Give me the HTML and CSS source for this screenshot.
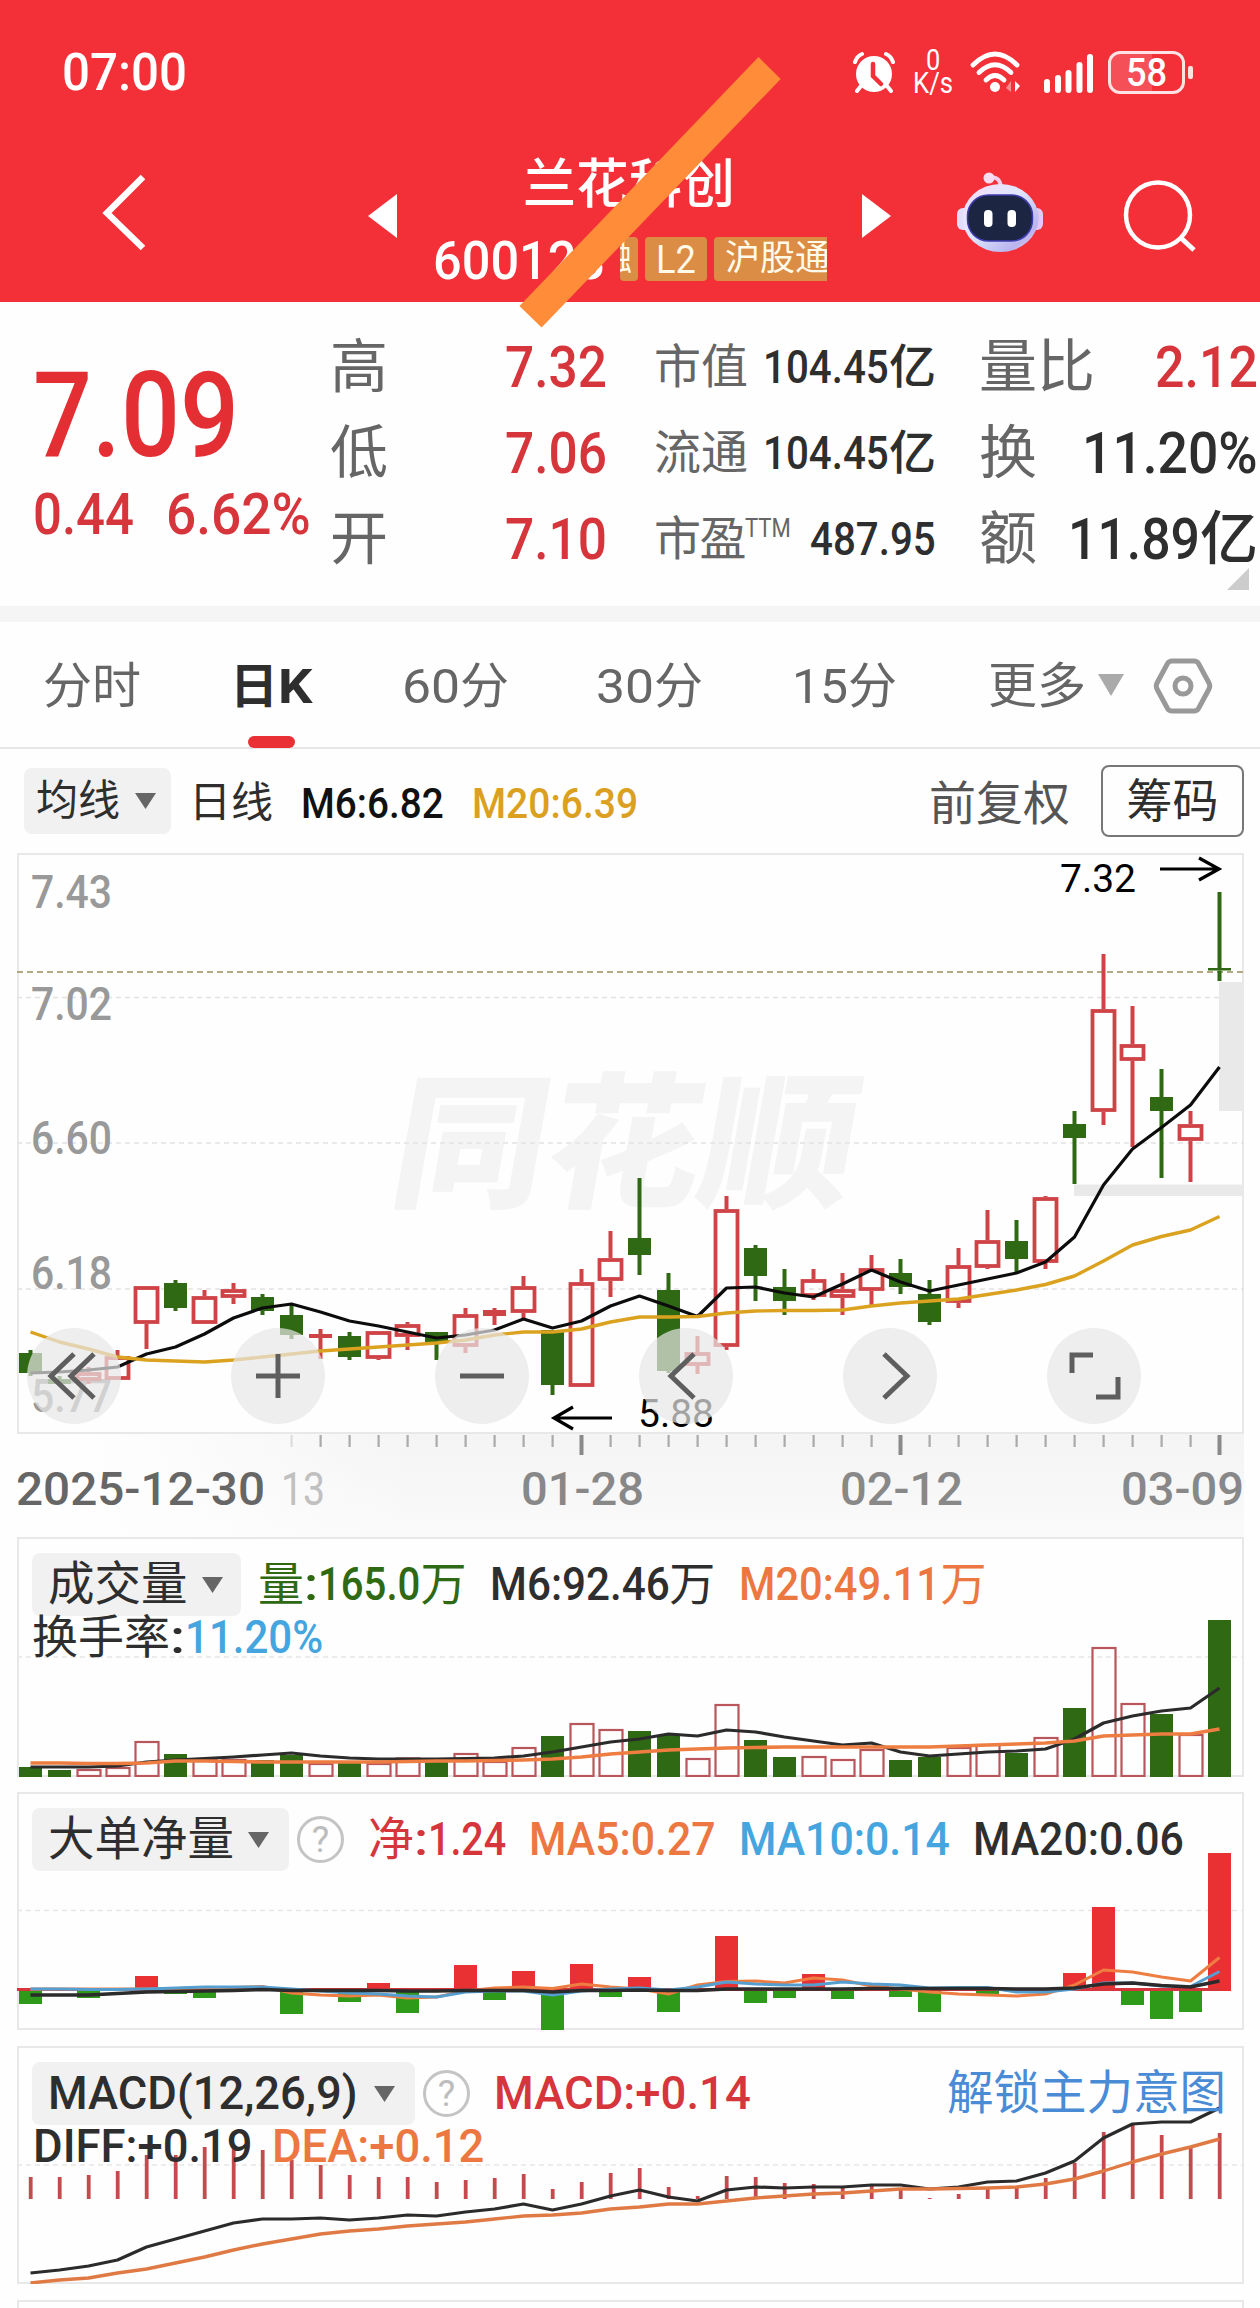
FILE: index.html
```html
<!DOCTYPE html>
<html lang="zh-CN">
<head>
<meta charset="utf-8">
<title>兰花科创 600123</title>
<link rel="stylesheet" href="styles.css">
</head>
<body>
<header class="top">
  <div class="status">
    <span class="clock"><span data-w="125">07:00</span></span>
    <svg class="i-alarm" width="42" height="42" viewBox="0 0 42 42"><circle cx="21" cy="23" r="18" fill="#fff"/><path d="M2 11 Q4 5 9 3M40 11Q38 5 33 3M8 35l-4 5M34 35l4 5" stroke="#fff" stroke-width="4" fill="none" stroke-linecap="round"/><path d="M20 13v12l8 8" stroke="#f32f38" stroke-width="4.5" fill="none" stroke-linecap="round"/></svg>
    <span class="rate"><b data-w="14">0</b><b data-w="40">K/s</b></span>
    <svg class="i-wifi" width="52" height="42" viewBox="0 0 52 42"><g fill="none" stroke="#fff" stroke-width="4.8" stroke-linecap="round"><path d="M3 14Q25 -8 47 14"/><path d="M9 21.500Q25 6 41 21.500"/><path d="M16 29Q25 20 34 29"/></g><circle cx="25" cy="36" r="5" fill="#fff"/><path d="M45 30v11l5-6z" fill="#fff"/><path d="M41 30v11l-5-4z" fill="#fff" opacity=".45"/></svg>
    <svg class="i-signal" width="50" height="42" viewBox="0 0 50 42"><g fill="#fff"><rect x="0" y="27" width="6" height="14" rx="3"/><rect x="11" y="23" width="6" height="18" rx="3"/><rect x="21.500" y="18" width="6" height="23" rx="3"/><rect x="32.500" y="10" width="6" height="31" rx="3"/><rect x="43" y="2" width="6" height="39" rx="3"/></g></svg>
    <span class="battery"><span data-w="41">58</span></span><i class="nub"></i>
  </div>
  <nav class="nav">
    <svg class="i-back" width="50" height="84" viewBox="0 0 50 84"><path d="M43 6L7 42l36 35" fill="none" stroke="#fff" stroke-width="6.500"/></svg>
    <svg class="i-prev" width="29" height="44" viewBox="0 0 29 44"><path d="M29 0v44L0 22z" fill="#fff"/></svg>
    <div class="stock">
      <div class="name">兰花科创</div>
      <div class="codes"><span class="code"><span data-w="172">600123</span></span><em class="tag cut">融</em><em class="tag l2"><span data-w="40">L2</span></em><em class="tag hgt">沪股通</em></div>
    </div>
    <svg class="i-next" width="29" height="44" viewBox="0 0 29 44"><path d="M0 0v44l29-22z" fill="#fff"/></svg>
    <svg class="i-robot" width="86" height="86" viewBox="957 170 86 86">
      <defs><linearGradient id="head" x1="0" y1="0" x2="1" y2="1"><stop offset="0" stop-color="#f8dcf6"/><stop offset=".45" stop-color="#dfe7ff"/><stop offset=".8" stop-color="#b9b4ee"/><stop offset="1" stop-color="#f5d7ea"/></linearGradient></defs>
      <path d="M989 178q11-3 12 10" fill="none" stroke="#f3cdea" stroke-width="4"/><circle cx="989" cy="178" r="5.500" fill="#f8dcf0"/>
      <rect x="957" y="208" width="14" height="22" rx="6" fill="#e3dcff"/><rect x="1029" y="208" width="14" height="22" rx="6" fill="#e3c7f4"/>
      <ellipse cx="1000.500" cy="218" rx="38" ry="34" fill="url(#head)"/>
      <rect x="967.500" y="195" width="65" height="46" rx="21" fill="#1c2541" stroke="#3f3cae" stroke-width="1.500"/>
      <rect x="984" y="210" width="8.500" height="17" rx="4" fill="#fff"/><rect x="1007.500" y="210" width="8.500" height="17" rx="4" fill="#fff"/>
    </svg>
    <svg class="i-search" width="76" height="76" viewBox="1122 177 76 76"><ellipse cx="1158" cy="214" rx="32" ry="32.500" fill="none" stroke="#fff" stroke-width="4.500"/><path d="M1181 237l13 12" stroke="#fff" stroke-width="5"/></svg>
  </nav>
  <svg class="strike" width="264" height="274" viewBox="518 55 264 274"><path d="M758.500 57L780.700 79 541.600 327.500 519.500 306z" fill="#ff8c38"/></svg>
</header>

<section class="quote">
  <div class="price">
    <div class="last"><span data-w="206">7.09</span></div>
    <div class="chg"><span data-w="101">0.44</span><span data-w="145">6.62%</span></div>
  </div>
  <div class="col c2">
    <p><label>高</label><b class="red" data-w="102">7.32</b></p>
    <p><label>低</label><b class="red" data-w="102">7.06</b></p>
    <p><label>开</label><b class="red" data-w="102">7.10</b></p>
  </div>
  <div class="col c3">
    <p><label>市值</label><span class="v"><b data-w="126">104.45</b><b>亿</b></span></p>
    <p><label>流通</label><span class="v"><b data-w="126">104.45</b><b>亿</b></span></p>
    <p><label class="pe">市盈<sup data-w="46">TTM</sup></label><span class="v"><b data-w="126">487.95</b></span></p>
  </div>
  <div class="col c4">
    <p><label>量比</label><b class="red" data-w="103">2.12</b></p>
    <p><label>换</label><b data-w="176">11.20%</b></p>
    <p><label>额</label><span class="v"><b data-w="132">11.89</b><b>亿</b></span></p>
  </div>
  <svg class="corner" width="22" height="22"><path d="M22 0v22H0z" fill="#ccc"/></svg>
</section>

<nav class="tabs">
  <a>分时</a><a class="on">日<span data-w="35">K</span></a><a><span data-w="58">60</span>分</a><a><span data-w="58">30</span>分</a><a><span data-w="56">15</span>分</a><a class="more">更多</a>
  <svg class="tri big" width="26" height="22"><path d="M0 0h26L13 22z"/></svg>
  <svg class="hex" width="60" height="58" viewBox="0 0 60 58"><path d="M19 4h22q3 0 4.500 2.500L56 26q1.500 3 0 6L45.500 51.500Q44 54 41 54H19q-3 0-4.500-2.500L4 32q-1.500-3 0-6L14.500 6.500Q16 4 19 4z" fill="none" stroke="#999" stroke-width="5"/><circle cx="30" cy="29" r="8" fill="none" stroke="#999" stroke-width="5"/></svg>
</nav>

<div class="ma">
  <span class="pick">均线<svg class="tri" width="21" height="16"><path d="M0 0h21L10.500 16z"/></svg></span>
  <span class="day">日线</span><b class="m6" data-w="143">M6:6.82</b><b class="m20" data-w="166">M20:6.39</b>
  <span class="adj">前复权</span><span class="chip">筹码</span>
</div>

<section class="kline">
  <svg id="k" viewBox="17 853 1227 581" width="1227" height="581"></svg>
  <div class="tools">
    <svg viewBox="0 0 94 96"><path d="M47 26L24 48l23 22M67 26L44 48l23 22"/></svg>
    <svg viewBox="0 0 94 96"><path d="M25 48h44M47 26v44"/></svg>
    <svg viewBox="0 0 94 96"><path d="M25 48h44"/></svg>
    <svg viewBox="0 0 94 96"><path d="M55 26L32 48l23 22"/></svg>
    <svg viewBox="0 0 94 96"><path d="M41 26l23 22-23 22"/></svg>
    <svg viewBox="0 0 94 96"><path d="M25 45V27h21M49 69h22V49"/></svg>
  </div>
</section>
<div class="axis"><svg id="axis" viewBox="0 1434 1244 103" width="1244" height="103"></svg></div>

<section class="panel vol">
  <svg id="v" viewBox="17 1537 1227 240" width="1227" height="240"></svg>
  <div class="legend">
    <div class="row"><span class="pick">成交量<svg class="tri" width="21" height="16"><path d="M0 0h21L10.500 16z"/></svg></span>
      <span class="green">量<b data-w="14">:</b><b data-w="102">165.0</b>万</span>
      <span class="dark"><b data-w="180">M6:92.46</b>万</span>
      <span class="orange"><b data-w="201">M20:49.11</b>万</span></div>
    <div class="row2"><span class="dark">换手率<b data-w="15">:</b></span><b class="blue" data-w="138">11.20%</b></div>
  </div>
</section>

<section class="panel net">
  <svg id="n" viewBox="17 1792 1227 238" width="1227" height="238"></svg>
  <div class="legend">
    <div class="row"><span class="pick">大单净量<svg class="tri" width="21" height="16"><path d="M0 0h21L10.500 16z"/></svg></span>
      <i class="help">?</i><span class="red">净<b data-w="14">:</b><b data-w="78">1.24</b></span><b class="orange" data-w="187">MA5:0.27</b><b class="blue" data-w="211">MA10:0.14</b><b class="dark" data-w="211">MA20:0.06</b></div>
  </div>
</section>

<section class="panel macd">
  <svg id="m" viewBox="17 2046 1227 238" width="1227" height="238"></svg>
  <div class="legend">
    <div class="row"><span class="pick"><b data-w="310">MACD(12,26,9)</b><svg class="tri" width="21" height="16"><path d="M0 0h21L10.500 16z"/></svg></span>
      <i class="help">?</i><b class="red" data-w="257">MACD:+0.14</b><a class="link">解锁主力意图</a></div>
    <div class="row2"><b class="dark" data-w="220">DIFF:+0.19</b><b class="orange" data-w="212">DEA:+0.12</b></div>
  </div>
</section>
<section class="panel last-panel"></section>
<script src="chart.js"></script>
</body>
</html>
```

FILE: styles.css
```css
* { box-sizing: border-box; }
body { margin: 0; width: 1260px; height: 2308px; overflow: hidden; background: #fefefe; color: #2e2e2e; font-family: Roboto, "Noto Sans CJK SC", sans-serif; }
b, i, em { font-weight: 500; font-style: normal; }
p { margin: 0; }
svg { display: block; flex: none; }
[data-w] { display: inline-block; white-space: nowrap; transform-origin: 0 50%; flex: none; }
.red { color: #d6353b; }
.green { color: #2f6913; }
.orange { color: #ec7741; }
.blue { color: #45a5de; }
.dark { color: #2e2e2e; }

.top { position: relative; height: 302px; background: #f32f38; color: #fff; }
.status { height: 146px; display: flex; align-items: center; padding-left: 62px; }
.clock { font-size: 52px; width: 790px; line-height: 60px; font-weight: 500; }
.i-alarm { margin-left: 1px; margin-top: -2px; }
.rate { width: 40px; margin-left: 18px; margin-top: -2px; display: flex; flex-direction: column; align-items: center; font-size: 29px; line-height: 23px; }
.rate b { font-weight: 400; }
.i-wifi { margin-left: 17px; margin-top: -2px; }
.i-signal { margin-left: 22px; }
.battery { margin-left: 14px; width: 77px; height: 43px; margin-top: -2px; border: 3px solid #ffe3e4; border-radius: 12px; background: linear-gradient(90deg, #f9808666 58%, transparent 58%), #f32f38; font-size: 38px; font-weight: 500; line-height: 38px; padding-left: 15px; }
.nub { width: 5px; height: 13px; margin-left: 3px; margin-top: -2px; border-radius: 2px; background: #ffe3e4; }
.nav { height: 156px; display: flex; align-items: center; padding-bottom: 16px; }
.i-back { margin-left: 100px; margin-top: -6px; }
.i-prev { margin-left: 218px; }
.stock { width: 393px; height: 140px; margin-left: 37px; }
.name { font-size: 53px; line-height: 70px; margin-top: 4px; margin-right: 3px; text-align: center; font-weight: 500; white-space: nowrap; }
.codes { display: flex; height: 44px; margin-top: 17px; line-height: 44px; }
.code { width: 187px; margin-left: -1px; padding-top: 2px; font-size: 54px; font-weight: 500; }
.tag { height: 44px; background: #db8c45; color: #fffbe8; border-radius: 4px; font-size: 35px; line-height: 43px; overflow: hidden; white-space: nowrap; font-weight: 400; }
.cut { width: 18px; display: flex; justify-content: flex-end; padding-right: 6px; margin-right: 7px; }
.l2 { width: 62px; margin-right: 7px; padding-left: 11px; font-size: 38px; line-height: 46px; }
.hgt { width: 113px; padding-left: 11px; border-radius: 4px 0 0 4px; line-height: 44px; }
.i-next { margin-left: 35px; }
.i-robot { margin-left: 66px; margin-top: -6px; }
.i-search { margin-left: 79px; }
.strike { position: absolute; left: 518px; top: 55px; z-index: 2; }

.quote { position: relative; height: 304px; display: flex; padding-top: 22px; }
.price { width: 333px; padding-left: 33px; color: #e32f33; }
.last { font-size: 119px; font-weight: 500; line-height: 120px; margin-top: 32px; }
.chg { display: flex; gap: 32px; font-size: 58px; font-weight: 500; line-height: 60px; margin-top: 8px; color: #d6353b; }
.col p { height: 86px; display: flex; justify-content: space-between; align-items: center; line-height: 86px; font-size: 58px; white-space: nowrap; }
.col label { color: #666; font-weight: 400; display: flex; font-size: 58px; }
.v { display: flex; }
.c2 { width: 277px; margin-left: -3px; }
.c3 { width: 282px; margin-left: 47px; }
.c3 p { font-size: 47px; }
.c3 label { font-size: 47px; }
.c4 { width: 279px; margin-left: 43px; }
.pe { letter-spacing: -1.500px; }
.pe sup { font-size: 25px; line-height: 66px; vertical-align: top; letter-spacing: 0; }
.corner { position: absolute; left: 1227px; top: 266px; }

.tabs { height: 143px; border-top: 16px solid #f5f5f5; border-bottom: 2px solid #e6e6e6; display: flex; color: #666; font-size: 49px; line-height: 129px; }
.tabs a { display: block; height: 125px; white-space: nowrap; }
.tabs a:nth-child(1) { margin-left: 43px; width: 187px; }
.tabs .on { width: 172px; color: #2e2e2e; font-weight: 700; font-size: 48px; position: relative; }
.on::after { content: ""; position: absolute; left: 18px; bottom: -1px; width: 47px; height: 12px; border-radius: 6px; background: #e93035; }
.tabs a:nth-child(3) { width: 194px; }
.tabs a:nth-child(4) { width: 196px; }
.tabs a:nth-child(5) { width: 196px; }
.tabs .more { width: 110px; }
.tri path { fill: #666; }
.tri.big { margin-top: 52px; }
.tri.big path { fill: #aaa; }
.hex { margin: 35px 0 0 29px; }

.ma { height: 104px; display: flex; align-items: center; padding: 2px 0 3px 24px; font-size: 43px; line-height: 60px; }
.pick { display: flex; align-items: center; background: #f1f1f1; border-radius: 8px; white-space: nowrap; }
.ma .pick { width: 147px; height: 66px; padding-left: 12px; gap: 15px; font-size: 42px; }
.ma .day { margin-left: 18px; width: 112px; font-size: 42px; padding-top: 4px; }
.m6 { color: #111; }
.m20 { color: #dca021; margin-left: 28px; }
.ma b { padding-top: 5px; }
.adj { margin-left: auto; color: #555; font-size: 47px; padding-top: 7px; }
.chip { margin: 0 16px 0 31px; width: 143px; height: 72px; border: 2px solid #777; border-radius: 8px; font-size: 46px; line-height: 69px; text-align: center; }

.kline { display: grid; margin-left: 17px; width: 1227px; height: 581px; }
.kline > * { grid-area: 1 / 1; }
.tools { align-self: end; display: flex; gap: 110px; padding: 0 0 10px 10px; }
.tools svg { width: 94px; height: 96px; border-radius: 50%; background: rgba(231, 231, 231, .7); fill: none; stroke: #5e5e5e; stroke-width: 5; }
.axis { height: 103px; width: 1244px; background: linear-gradient(90deg, #fefefe 90px, transparent 420px), linear-gradient(#f4f4f4, #fafafa); }
.panel { display: grid; margin: 0 0 15px 17px; width: 1227px; height: 240px; }
.panel > * { grid-area: 1 / 1; }
.net, .macd { height: 239px; }
.legend { padding: 16px 0 0 15px; font-size: 46px; line-height: 65px; }
.row, .row2 { display: flex; align-items: center; white-space: nowrap; }
.row { height: 63px; }
.row2 { height: 42px; line-height: 42px; }
.row .pick { height: 63px; padding-left: 16px; gap: 14px; font-size: 46.500px; }
.vol .pick { width: 209px; margin-right: 17px; }
.vol .row > .green { margin-right: 23px; }
.vol .row > .dark { margin-right: 24px; }
.net .pick { width: 257px; }
.net .orange, .net .blue, .net .dark { margin-left: 23px; }
.macd .pick { width: 383px; gap: 16px; }
.help { width: 47px; height: 47px; margin-left: 8px; margin-right: 24px; border: 3px solid #c4c4c4; border-radius: 50%; color: #bdbdbd; font-size: 37px; line-height: 42px; text-align: center; font-weight: 400; }
.link { margin-left: auto; margin-right: 18px; color: #4a8bd6; font-size: 46.500px; }
.macd .row2 { gap: 19px; padding-left: 1px; }
.last-panel { height: 20px; border: 2px solid #e8e8e8; margin-bottom: 0; }
```

FILE: chart.js
```js
// Squeeze Latin runs to the condensed widths used by the layout.
document.querySelectorAll('[data-w]').forEach(function (el) {
  var w = +el.dataset.w, nat = el.offsetWidth;
  el.style.transform = 'scaleX(' + (w / nat) + ')';
  el.style.marginRight = (parseFloat(getComputedStyle(el).marginRight) + w - nat) + 'px';
});

var X = function (i) { return 30.5 + 29 * i; };
var R = '#cf4347', G = '#2f6913';
function rect(x, y, w, h, f, extra) { return '<rect x="' + x + '" y="' + y + '" width="' + w + '" height="' + h + '" fill="' + f + '" ' + (extra || '') + '/>'; }
function hline(y, c, dash, w) { return '<path d="M17 ' + y + 'H1244" stroke="' + c + '" stroke-width="' + (w || 1.5) + '" stroke-dasharray="' + dash + '"/>'; }
function frame(y, h) { return rect(18, y + 1, 1225, h - 2, 'none', 'stroke="#e8e8e8" stroke-width="2"'); }
function line(pts, c, w) {
  return '<polyline fill="none" stroke="' + c + '" stroke-width="' + w + '" stroke-linejoin="round" points="' +
    pts.map(function (y, i) { return y === null ? '' : X(i) + ',' + y; }).join(' ') + '"/>';
}
function text(x, y, size, w, s, c, extra) {
  return '<text x="' + x + '" y="' + y + '" font-size="' + size + '" textLength="' + w + '" lengthAdjust="spacingAndGlyphs" fill="' + c + '" ' + (extra || '') + '>' + s + '</text>';
}
var _ = null;

// Candles: [direction, body top, body bottom, high, low]
var K = [
  ['g',1353,1373,1350,1376],['g',1379,1384,1376,1386],['r',1372,1381,1367,1384],['r',1356,1380,1350,1380],['r',1286,1324,1286,1349],
  ['g',1283,1308,1280,1311],['r',1296,1324,1290,1324],['r',1289,1298,1283,1304],['g',1297,1311,1294,1315],['g',1315,1335,1304,1339],
  ['f',1334,1338,1329,1359],['g',1336,1357,1332,1360],['r',1331,1359,1331,1360],['r',1324,1337,1322,1350],['g',1332,1342,1332,1360],
  ['r',1314,1347,1308,1353],['f',1310,1316,1308,1325],['r',1286,1313,1276,1320],['g',1330,1385,1330,1395],['r',1282,1387,1269,1387],
  ['r',1258,1281,1231,1297],['g',1238,1255,1178,1275],['g',1290,1371,1273,1373],['r',1352,1366,1336,1374],['r',1209,1347,1196,1350],
  ['g',1248,1276,1245,1301],['g',1287,1301,1269,1315],['r',1279,1297,1269,1300],['r',1289,1298,1273,1315],['r',1268,1291,1255,1306],
  ['g',1273,1287,1259,1294],['g',1294,1322,1280,1325],['r',1265,1303,1248,1308],['r',1240,1268,1210,1269],['g',1241,1259,1220,1273],
  ['r',1197,1263,1196,1269],['g',1124,1138,1111,1184],['r',1009,1112,954,1125],['r',1044,1061,1006,1147],['g',1097,1111,1069,1178],
  ['r',1124,1141,1111,1182],['g',968,970.5,892,981]];
var k = frame(853, 581) +
  text(391, 1196, 146, 462, '同花顺', '#f4f4f4', 'font-family="Noto Sans CJK SC" font-weight="900" transform="translate(206 0) skewX(-10)"') +
  hline(997.5, '#e2e2e2', '5 4') + hline(1143, '#e2e2e2', '5 4') + hline(1289, '#e2e2e2', '5 4') + hline(972, '#b3a983', '6 4', 2) +
  rect(1219, 982, 25, 129, '#e9e9e9') + rect(1074, 1184.5, 170, 11.5, '#e9e9e9');
[[892, '7.43'], [1004, '7.02'], [1138, '6.60'], [1273, '6.18'], [1396, '5.77']].forEach(function (a) {
  k += text(31, a[0] + 16, 46, 81, a[1], '#999', 'font-weight="500"');
});
K.forEach(function (c, i) {
  var x = X(i), col = c[0] === 'g' ? G : R;
  if (c[3] < c[1]) k += rect(x - 2, c[3], 4, c[1] - c[3], col);
  if (c[4] > c[2]) k += rect(x - 2, c[2], 4, c[4] - c[2], col);
  if (c[0] === 'r') k += rect(x - 11, c[1] + 2, 22, c[2] - c[1] - 4, 'none', 'stroke="' + col + '" stroke-width="3.8"');
  else k += rect(x - 11.5, c[1], 23, c[2] - c[1], col);
});
k += line([1373,1372,1370,1367,1354,1347,1334,1318,1308,1304,1312,1321,1326,1332,1338,1335,1330,1319,1328,1321,1306,1296,1306,1316.5,1288,1287,1293,1297,1284,1270,1282,1291,1285,1279,1273,1262,1237,1185,1149,1127.5,1105,1067], '#0c0c0c', 3.2);
k += line([1332,1342,1349,1357,1360,1361,1362,1360,1357,1354,1351,1349,1347,1345,1343,1340,1335,1332,1332,1329,1322,1317,1317,1316.5,1313,1311,1310.5,1310.5,1310,1306,1303,1301,1299,1294.5,1290,1284.5,1276,1261,1245,1236.5,1230,1216.5], '#dba220', 3.4);
k += text(1060, 892, 39, 76, '7.32', '#000') + '<path d="M1160 869H1219M1199 858L1219 869 1199 880" fill="none" stroke="#000" stroke-width="3.2"/>';
k += text(638, 1427, 39, 76, '5.88', '#000') + '<path d="M612 1418H554M573 1407L554 1418 573 1429" fill="none" stroke="#000" stroke-width="3.2"/>';
document.getElementById('k').innerHTML = k;

// Date axis
var a = '';
for (var i = 9; i < 42; i++) {
  var major = i === 19 || i === 30 || i === 41;
  a += rect(X(i) - (major ? 2 : 1), 1435, major ? 4 : 2.2, major ? 20 : 12, i === 9 ? '#ddd' : major ? '#8a8a8a' : '#aaa');
}
a += text(16, 1505, 46, 249, '2025-12-30', '#666', 'font-weight="500"') + text(281, 1505, 46, 44, '13', '#c0c0c0') +
  text(521, 1505, 46, 123, '01-28', '#888', 'font-weight="500"') + text(840, 1505, 46, 123, '02-12', '#888', 'font-weight="500"') + text(1121, 1505, 46, 123, '03-09', '#888', 'font-weight="500"');
document.getElementById('axis').innerHTML = a;

// Volume
var dirs = 'ggrrrgrrggrgrrgrrrgrrggrrggrrrggrrgrgrrgrg';
var tops = [1767,1770,1769,1767,1741,1754,1759,1759,1760,1755,1763,1763,1763,1757.5,1762,1753,1761,1747,1736,1723,1729,1731,1735,1758,1704,1740,1757,1756,1759,1749,1760,1757,1747,1744,1753,1737,1708,1647,1703,1714,1734,1620];
var v = frame(1537, 240) + hline(1657, '#e6e6e6', '5 4');
tops.forEach(function (t, i) {
  v += dirs[i] === 'g' ? rect(X(i) - 11.5, t, 23, 1777 - t, G) : rect(X(i) - 11, t + 1, 23, 1775 - t, 'none', 'stroke="#b9565b" stroke-width="2.2"');
});
v += line([1767,1767,1767,1766,1762,1760,1758.5,1757,1755,1753,1756,1758,1759,1759,1759,1758.5,1758,1756,1752,1747,1742,1739,1734,1736,1730,1732,1737,1741,1745,1743,1752,1756,1754,1752,1751,1749,1739,1723,1716,1711,1708,1688], '#2b2b2b', 3.2);
v += line([1763,1763,1763.5,1763.5,1763,1761,1761,1761.5,1762,1762,1762,1762,1762,1761.5,1761,1761,1760.5,1760,1759,1757,1754,1752,1750,1749,1748,1747.5,1747,1747,1747,1747,1747,1747,1746,1745,1744,1743,1741,1736,1735,1734,1734,1729], '#ee7d42', 3.6);
document.getElementById('v').innerHTML = v;

// Net large orders: y of the free end of each bar around the zero line
var ends = [2004,_,1998,_,1976,1994,1998,_,_,2014,_,2002,1983,2013,_,1965,2000,1971,2030,1964,1997,1977,2012,_,1936,2003,1998,1974,1999,_,1997,2012,_,1995,_,_,1973,1907,2005,2019,2012,1853];
var n = frame(1792, 238) + hline(1910.5, '#e6e6e6', '5 4');
ends.forEach(function (e, i) {
  if (e === null) return;
  n += e > 1990 ? rect(X(i) - 11.5, 1990, 23, e - 1990, '#2f9a1a') : rect(X(i) - 11.5, e, 23, 1991 - e, '#e93133');
});
n += rect(17, 1988, 1203, 3, '#d6353b');
n += line([1989,1989,1989,1989,1989,1988.5,1988,1987.5,1986.5,1993,1995,1996,1995,1998,1997,1991,1988,1987,1988.5,1984,1987,1989,1994,1985,1981.5,1981,1983,1978,1980,1986,1989,1992,1994,1995,1996,1994,1985,1970,1972,1977,1981,1957.5], '#ee7d42', 3);
n += line([1989,1989,1989.5,1989.5,1989,1988,1987,1987,1987,1989,1991,1993,1994,1996,1997,1992,1991,1991,1995,1991,1989,1988,1990,1987,1982,1984,1985,1985,1982,1984,1985,1988,1987.5,1987.5,1992,1992,1989,1983,1983,1986,1986.5,1971.5], '#559ed0', 3);
n += line([1995,1995,1995,1993.5,1992,1991.5,1991,1990.5,1989.5,1990.5,1990.5,1990.5,1990.5,1991,1991,1990.5,1990.5,1990.5,1992,1990.5,1990.5,1990,1990.5,1990.5,1989,1989,1989,1989,1989,1988.5,1988.5,1988.5,1988.5,1988.5,1989,1989,1988,1984,1983,1985.5,1987,1981], '#2b2b2b', 3.4);
document.getElementById('n').innerHTML = n;

// MACD
var hist = [2177,2177,2175,2171,2155,2155,2147,2146,2150,2160,2165,2175,2177,2177,2182,2180,2178,2174,2189,2182,2173,2168,2187,2196,2176,2177,2183,2184,2187,2185,2189,2198,2194,2189,2188,2178,2163,2132,2124,2135,2147,2133];
var m = frame(2046, 238) + hline(2165, '#e6e6e6', '5 4');
hist.forEach(function (t, i) { m += rect(X(i) - 1.7, t, 3.8, 2199 - t, '#c64a4d'); });
m += line([2273,2270,2266,2260,2247,2239,2231,2223,2219,2219,2218,2220,2218,2215,2216,2212,2209,2204,2210,2204,2196,2190,2197,2201,2190,2187,2188,2187,2187,2185,2185,2189,2187,2182,2181,2173,2161,2138,2124,2122,2122,2108], '#2b2b2b', 3.2);
m += line([2283,2280,2278,2273,2269,2263,2257,2250,2244,2239,2234,2231,2229,2226,2224,2222,2219,2216,2215,2213,2209,2207,2204,2204,2201,2198,2196,2194,2193,2191,2189,2189,2188.5,2188,2187,2184,2179,2171,2162,2154,2147,2139], '#e07a45', 3.4);
document.getElementById('m').innerHTML = m;
```
